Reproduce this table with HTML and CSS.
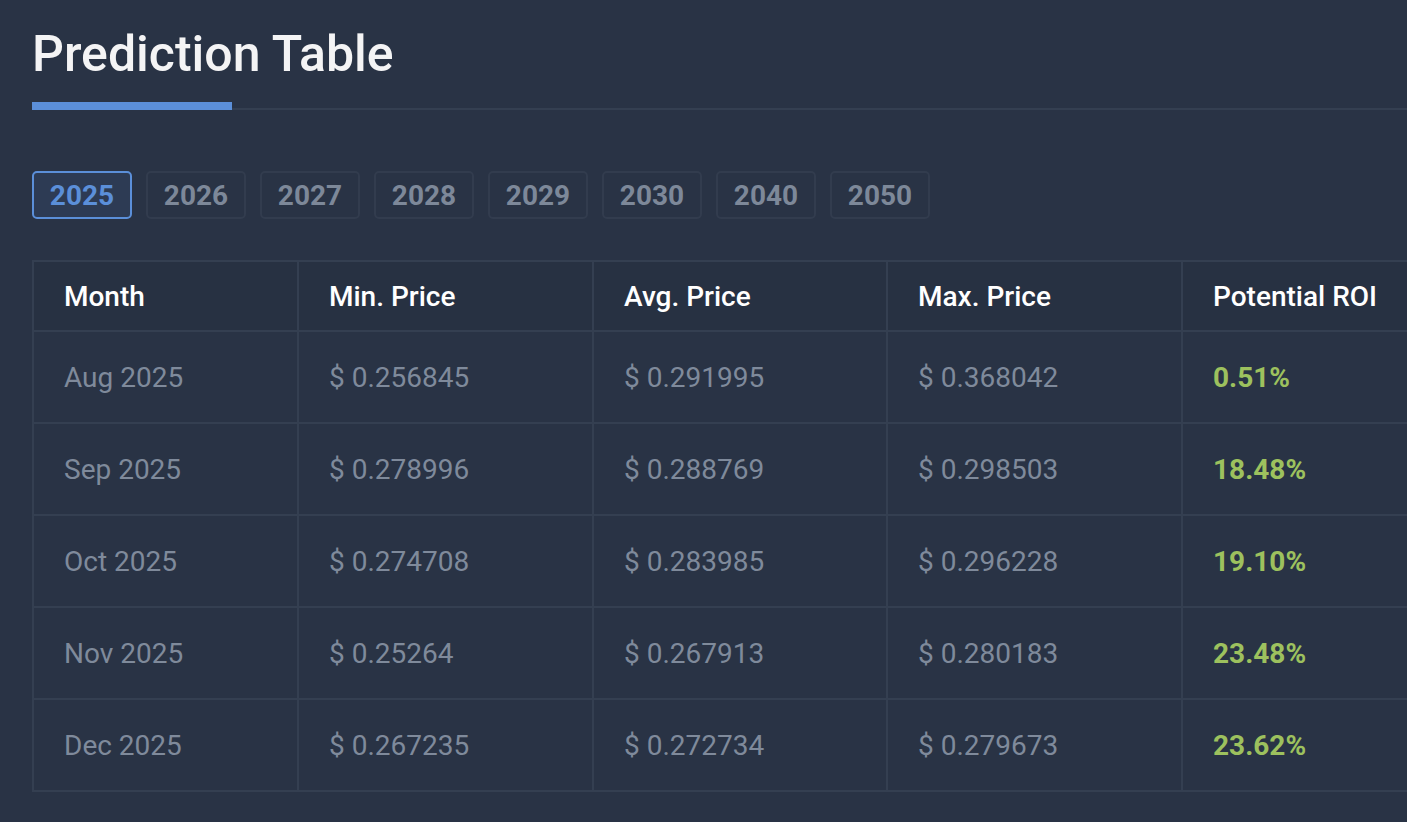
FILE: index.html
```html
<!DOCTYPE html>
<html lang="en">
<head>
<meta charset="utf-8">
<title>Prediction Table</title>
<link rel="stylesheet" href="styles.css">
</head>
<body>
<main class="page">
  <h1 class="title">Prediction Table</h1>
  <div class="title-rule">
    <span class="rule-accent"></span>
    <span class="rule-line"></span>
  </div>

  <nav class="tabs">
    <button class="tab active">2025</button>
    <button class="tab">2026</button>
    <button class="tab">2027</button>
    <button class="tab">2028</button>
    <button class="tab">2029</button>
    <button class="tab">2030</button>
    <button class="tab">2040</button>
    <button class="tab">2050</button>
  </nav>

  <table class="pred">
    <colgroup>
      <col class="c1"><col class="c2"><col class="c3"><col class="c4"><col class="c5">
    </colgroup>
    <thead>
      <tr><th>Month</th><th>Min. Price</th><th>Avg. Price</th><th>Max. Price</th><th>Potential ROI</th></tr>
    </thead>
    <tbody>
      <tr><td>Aug 2025</td><td>$ 0.256845</td><td>$ 0.291995</td><td>$ 0.368042</td><td class="roi">0.51%</td></tr>
      <tr><td>Sep 2025</td><td>$ 0.278996</td><td>$ 0.288769</td><td>$ 0.298503</td><td class="roi">18.48%</td></tr>
      <tr><td>Oct 2025</td><td>$ 0.274708</td><td>$ 0.283985</td><td>$ 0.296228</td><td class="roi">19.10%</td></tr>
      <tr><td>Nov 2025</td><td>$ 0.25264</td><td>$ 0.267913</td><td>$ 0.280183</td><td class="roi">23.48%</td></tr>
      <tr><td>Dec 2025</td><td>$ 0.267235</td><td>$ 0.272734</td><td>$ 0.279673</td><td class="roi">23.62%</td></tr>
    </tbody>
  </table>
</main>
</body>
</html>
```

FILE: styles.css
```css
html, body {
  margin: 0;
  padding: 0;
  background: #293345;
  overflow: hidden;
  height: 100%;
}

body {
  font-family: Roboto, "Liberation Sans", Arial, sans-serif;
  color: #7f8a9b;
}

.page {
  padding: 25px 0 0 32px;
  overflow: hidden;
}

.title {
  margin: 0;
  font-size: 50px;
  line-height: 58px;
  font-weight: 500;
  color: #f4f4f5;
  letter-spacing: 0;
}

.title-rule {
  display: flex;
  align-items: flex-end;
  margin-top: 19px;
}

.rule-accent {
  width: 200px;
  height: 8px;
  background: #5b8fd9;
}

.rule-line {
  flex: 1;
  height: 2px;
  background: #343f51;
}

.tabs {
  display: flex;
  gap: 14px;
  margin-top: 61px;
}

.tab {
  box-sizing: border-box;
  width: 100px;
  height: 48px;
  padding: 0;
  border: 2px solid #323c4e;
  border-radius: 5px;
  background: transparent;
  font-family: inherit;
  font-size: 28px;
  font-weight: 700;
  color: #7d8899;
  cursor: pointer;
}

.tab.active {
  border-color: #5b8fd9;
  background: #2d3b54;
  color: #5b8fd9;
}

.pred {
  margin-top: 41px;
  table-layout: fixed;
  border-collapse: separate;
  border-spacing: 0;
  width: 1446px;
  border-top: 2px solid #343f51;
  border-left: 2px solid #343f51;
}

.c1 { width: 265px; }
.c2 { width: 295px; }
.c3 { width: 294px; }
.c4 { width: 295px; }
.c5 { width: 295px; }

.pred th,
.pred td {
  box-sizing: border-box;
  padding: 0 0 0 30px;
  text-align: left;
  vertical-align: middle;
  border-right: 2px solid #343f51;
  border-bottom: 2px solid #343f51;
  font-size: 28px;
  white-space: nowrap;
}

.pred th {
  height: 70px;
  font-weight: 500;
  color: #ffffff;
  background: #273142;
}

.pred td {
  height: 92px;
  font-weight: 400;
  color: #7f8a9b;
}

.pred td.roi {
  font-weight: 700;
  color: #9dc15e;
}
```
